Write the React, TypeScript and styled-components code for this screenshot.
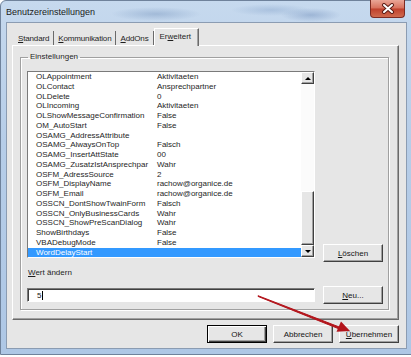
import styled, { createGlobalStyle } from "styled-components";

const GlobalStyle = createGlobalStyle`
  html, body {
    margin: 0;
    padding: 0;
    background: #ffffff;
  }
  body {
    font-family: "Liberation Sans", Arial, sans-serif;
  }
`;

// names as the list shows them (the long one is cut by the column)
const settings: [string, string][] = [
  ["OLAppointment", "Aktivitaeten"],
  ["OLContact", "Ansprechpartner"],
  ["OLDelete", "0"],
  ["OLIncoming", "Aktivitaeten"],
  ["OLShowMessageConfirmation", "False"],
  ["OM_AutoStart", "False"],
  ["OSAMG_AddressAttribute", ""],
  ["OSAMG_AlwaysOnTop", "Falsch"],
  ["OSAMG_InsertAttState", "00"],
  ["OSAMG_ZusatzIstAnsprechpar", "Wahr"],
  ["OSFM_AdressSource", "2"],
  ["OSFM_DisplayName", "rachow@organice.de"],
  ["OSFM_Email", "rachow@organice.de"],
  ["OSSCN_DontShowTwainForm", "Falsch"],
  ["OSSCN_OnlyBusinessCards", "Wahr"],
  ["OSSCN_ShowPreScanDialog", "Wahr"],
  ["ShowBirthdays", "False"],
  ["VBADebugMode", "False"],
  ["WordDelayStart", ""]
];

const tabs = [
  { key: "S", rest: "tandard" },
  { key: "K", rest: "ommunikation" },
  { key: "A", rest: "ddOns" }
];

const App = () => {
  return (
    <Screen>
      <GlobalStyle />
      <Window>
        <TitleBar>
          <Title>Benutzereinstellungen</Title>
          <CloseButton>
            <svg width="14" height="11" viewBox="0 0 14 11">
              <path d="M3 2 L11 9 M11 2 L3 9" stroke="#5b1d16" strokeWidth="4" strokeLinecap="round" />
              <path d="M3 2 L11 9 M11 2 L3 9" stroke="#ffffff" strokeWidth="2" strokeLinecap="round" />
            </svg>
          </CloseButton>
        </TitleBar>
        <Client>
          <TabStrip>
            {tabs.map((t) => (
              <Tab key={t.key}>
                <Key>{t.key}</Key>
                {t.rest}
              </Tab>
            ))}
            <Tab $active>
              Er<Key>w</Key>eitert
            </Tab>
          </TabStrip>
          <TabPanel>
            <GroupBox>
              <Legend>Einstellungen</Legend>
              <ListRow>
                <ListBox>
                  <Rows>
                    {settings.map(([name, value], i) => (
                      <Row key={name} $selected={i === settings.length - 1}>
                        <Cell>{name}</Cell>
                        <Cell>{value}</Cell>
                      </Row>
                    ))}
                  </Rows>
                  <ScrollBar>
                    <ArrowButton>
                      <Arrow $dir="up" />
                    </ArrowButton>
                    <Track>
                      <Thumb />
                    </Track>
                    <ArrowButton>
                      <Arrow $dir="down" />
                    </ArrowButton>
                  </ScrollBar>
                </ListBox>
                <Button>
                  <Key>L</Key>öschen
                </Button>
              </ListRow>
              <FieldLabel>
                <Key>W</Key>ert ändern
              </FieldLabel>
              <InputRow>
                <ValueBox>
                  5<Caret />
                </ValueBox>
                <Button>
                  <Key>N</Key>eu...
                </Button>
              </InputRow>
            </GroupBox>
          </TabPanel>
          <ButtonRow>
            <Button $primary>OK</Button>
            <Button>Abbrechen</Button>
            <Button>
              <Key>Ü</Key>bernehmen
            </Button>
          </ButtonRow>
        </Client>
      </Window>
      <Overlay width="411" height="357" viewBox="0 0 411 357">
        <path d="M258 295.7 L340 327.3 L339.4 329 L258 296.4 Z" fill="#b3141b" stroke="#b3141b" strokeWidth="1" />
        <polygon points="350,331 336.5,331.8 341,321.5" fill="#b3141b" />
      </Overlay>
    </Screen>
  );
};

const Screen = styled.div`
  position: relative;
  width: 411px;
  height: 357px;
  overflow: hidden;
  background: #ffffff;
`;

const Window = styled.div`
  box-sizing: border-box;
  width: 417px;
  height: 355px;
  display: flex;
  flex-direction: column;
  padding: 0 9px 5px 5px;
  border: 1px solid #6f829b;
  border-radius: 6px 6px 0 0;
  background: linear-gradient(180deg, #c6d9ee 0%, #b6cde8 40%, #aec7e5 100%);
`;

const TitleBar = styled.div`
  height: 21px;
  display: flex;
  align-items: center;
  justify-content: space-between;
  background:
    radial-gradient(ellipse 45px 7px at 150px 13px, rgba(120, 150, 190, 0.45), transparent),
    radial-gradient(ellipse 40px 6px at 265px 9px, rgba(130, 160, 200, 0.4), transparent),
    radial-gradient(ellipse 30px 7px at 305px 14px, rgba(110, 140, 185, 0.45), transparent);
`;

const Title = styled.div`
  font-size: 9px;
  line-height: 12px;
  color: #1b1b1b;
  padding-top: 1px;
`;

const CloseButton = styled.div`
  align-self: flex-start;
  box-sizing: border-box;
  width: 35px;
  height: 18px;
  margin: -1px 2px 0 0;
  display: flex;
  align-items: center;
  justify-content: center;
  border: 1px solid #7d2b22;
  border-top: none;
  border-radius: 0 0 4px 4px;
  background: linear-gradient(180deg, #eaa697 0%, #d8705c 48%, #c0402c 52%, #cf6a4e 100%);
`;

const Client = styled.div`
  flex: 1;
  display: flex;
  flex-direction: column;
  padding: 5px 7px 5px 5px;
  border: 1px solid #8b9cb2;
  background: #e6e6e6;
`;

const TabStrip = styled.div`
  height: 17px;
  display: flex;
  align-items: flex-end;
  padding-left: 2px;
  position: relative;
  z-index: 1;
`;

const Tab = styled.div<{ $active?: boolean }>`
  box-sizing: border-box;
  height: ${(p) => (p.$active ? "18px" : "14px")};
  margin-bottom: ${(p) => (p.$active ? "-1px" : "0")};
  display: flex;
  align-items: center;
  padding: ${(p) => (p.$active ? "0 7px 2px 5px" : "0 4px")};
  font-size: 8px;
  letter-spacing: ${(p) => (p.$active ? "0" : "-0.15px")};
  color: #1e1e1e;
  background: #e6e6e6;
  border-right: 1px solid #6a6a6a;
  border-top: ${(p) => (p.$active ? "1px solid #ffffff" : "none")};
  border-left: ${(p) => (p.$active ? "1px solid #ffffff" : "none")};
  box-shadow: ${(p) => (p.$active ? "inset -1px 0 0 #a0a0a0" : "none")};
`;

const Key = styled.span`
  text-decoration: underline;
`;

const TabPanel = styled.div`
  height: 275px;
  box-sizing: border-box;
  padding: 6px 9px 9px 7px;
  border: 1px solid;
  border-color: #ffffff #6a6a6a #6a6a6a #ffffff;
  box-shadow: inset -1px -1px 0 #a0a0a0;
`;

const GroupBox = styled.fieldset`
  margin: 0;
  min-width: 0;
  padding: 8px 5px 5px 6px;
  border: 1px solid #a0a0a0;
  box-shadow: inset 1px 1px 0 #ffffff, 1px 1px 0 #ffffff;
`;

const Legend = styled.legend`
  margin-left: 1px;
  padding: 0 2px;
  font-size: 8px;
  line-height: 10px;
  color: #1e1e1e;
`;

const ListRow = styled.div`
  display: flex;
  align-items: flex-end;
  gap: 8px;
`;

const ListBox = styled.div`
  box-sizing: border-box;
  width: 288px;
  height: 187px;
  margin: 1px 0 4px 0;
  display: flex;
  border: 1px solid;
  border-color: #7a7a7a #ffffff #ffffff #7a7a7a;
  background: #ffffff;
`;

const Rows = styled.div`
  flex: 1;
  min-width: 0;
  overflow: hidden;
`;

const Row = styled.div<{ $selected?: boolean }>`
  display: grid;
  grid-template-columns: 121px minmax(0, 1fr);
  height: 9.75px;
  line-height: 9.75px;
  padding-left: 8px;
  font-size: 8px;
  color: ${(p) => (p.$selected ? "#ffffff" : "#262626")};
  background: ${(p) => (p.$selected ? "#3399ff" : "transparent")};
`;

const Cell = styled.span`
  min-width: 0;
  white-space: nowrap;
`;

const ScrollBar = styled.div`
  width: 13px;
  display: flex;
  flex-direction: column;
  background: #ffffff;
`;

const ArrowButton = styled.div`
  box-sizing: border-box;
  height: 12px;
  display: flex;
  align-items: center;
  justify-content: center;
  background: #e6e6e6;
  border: 1px solid;
  border-color: #ffffff #404040 #404040 #ffffff;
  box-shadow: inset -1px -1px 0 #a0a0a0;
`;

const Arrow = styled.span<{ $dir: "up" | "down" }>`
  width: 0;
  height: 0;
  border-left: 3px solid transparent;
  border-right: 3px solid transparent;
  border-bottom: ${(p) => (p.$dir === "up" ? "3px solid #000000" : "none")};
  border-top: ${(p) => (p.$dir === "down" ? "3px solid #000000" : "none")};
`;

const Track = styled.div`
  flex: 1;
  display: flex;
  flex-direction: column;
  justify-content: flex-end;
  background: #fbfbfb;
`;

const Thumb = styled.div`
  box-sizing: border-box;
  height: 54px;
  background: #e6e6e6;
  border: 1px solid;
  border-color: #ffffff #404040 #404040 #ffffff;
  box-shadow: inset -1px -1px 0 #a0a0a0;
`;

const Button = styled.button<{ $primary?: boolean }>`
  box-sizing: border-box;
  width: 60px;
  height: 18px;
  padding: 0;
  flex: none;
  font-family: "Liberation Sans", Arial, sans-serif;
  font-size: 8px;
  color: #151515;
  background: #e6e6e6;
  border: 1px solid;
  border-color: ${(p) =>
    p.$primary ? "#000000" : "#ffffff #404040 #404040 #ffffff"};
  box-shadow: ${(p) =>
    p.$primary
      ? "inset 1px 1px 0 #ffffff, inset -1px -1px 0 #404040, inset -2px -2px 0 #a0a0a0"
      : "inset -1px -1px 0 #a0a0a0"};
`;

const FieldLabel = styled.div`
  margin-top: 6px;
  padding-left: 1px;
  font-size: 8px;
  line-height: 10px;
  color: #1e1e1e;
`;

const InputRow = styled.div`
  margin-top: 8px;
  height: 18px;
  display: flex;
  align-items: center;
  gap: 8px;
`;

const ValueBox = styled.div`
  box-sizing: border-box;
  width: 288px;
  height: 14px;
  display: flex;
  align-items: center;
  padding-left: 9px;
  font-size: 8px;
  color: #151515;
  background: #ffffff;
  border: 1px solid;
  border-color: #7a7a7a #ffffff #ffffff #7a7a7a;
  box-shadow: inset 1px 1px 0 #404040;
`;

const Caret = styled.span`
  width: 1px;
  height: 9px;
  margin-left: 1px;
  background: #000000;
`;

const ButtonRow = styled.div`
  margin-top: 5px;
  display: flex;
  justify-content: flex-end;
  gap: 6px;
`;

const Overlay = styled.svg`
  position: absolute;
  left: 0;
  top: 0;
  pointer-events: none;
`;

export default App;
